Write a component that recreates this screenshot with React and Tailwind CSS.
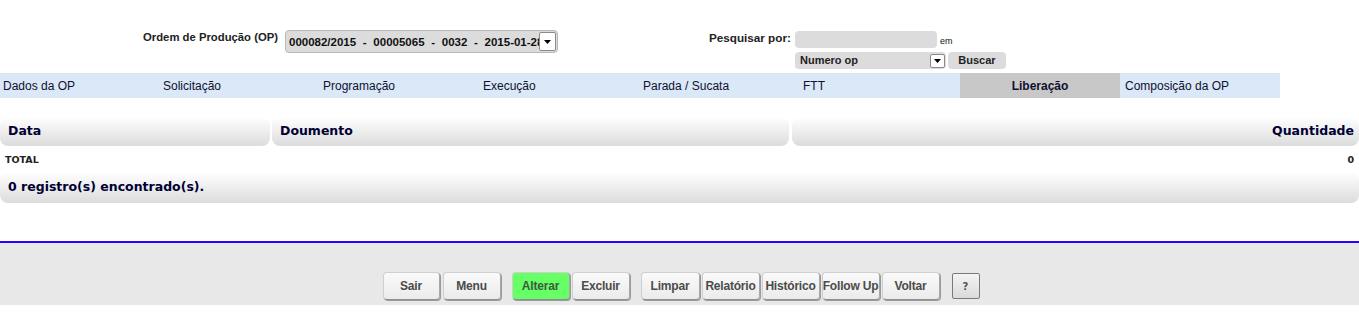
import React from "react";

const tabs = [
  "Dados da OP",
  "Solicitação",
  "Programação",
  "Execução",
  "Parada / Sucata",
  "FTT",
  "Liberação",
  "Composição da OP",
];

function Arrow({ className }) {
  return (
    <div className={"flex items-center justify-center bg-white border border-[#8a8a8a] rounded-[2px] " + className}>
      <svg width="7" height="4" viewBox="0 0 7 4">
        <path d="M0 0 L7 0 L3.5 4 Z" fill="#000" />
      </svg>
    </div>
  );
}

function Btn({ children, green, w = "w-[58px]" }) {
  return (
    <div
      className={
        "h-[28px] " +
        w +
        " flex items-center justify-center overflow-hidden whitespace-nowrap rounded-[4px] border border-[#cfcfcf] border-b-[#8e8e8e] border-r-[#a8a8a8] shadow-[1px_1px_0_#9a9a9a] text-[12px] font-bold tracking-[-0.2px] " +
        (green ? "bg-[#66ff66] text-[#3f5a3f]" : "bg-gradient-to-b from-[#fafafa] to-[#ebebeb] text-[#4b4b4b]")
      }
      style={{ fontFamily: '"Liberation Sans", Arial, sans-serif' }}
    >
      {children}
    </div>
  );
}

export default function App() {
  const sans = { fontFamily: '"Liberation Sans", Arial, sans-serif' };
  const dv = { fontFamily: '"DejaVu Sans", Verdana, sans-serif' };
  return (
    <div className="w-[1359px] h-[313px] bg-white overflow-hidden" style={sans}>
      {/* top filters */}
      <div className="flex h-[73px] pt-[30px]">
        <div className="w-[278px] text-right text-[11.3px] font-bold text-[#222] pt-[1px] leading-[13px]">
          Ordem de Produção (OP)
        </div>
        <div className="ml-[7px] w-[273px] h-[23px] rounded-[4px] bg-[#dcdcdc] border border-[#b8b8b8] flex items-center relative overflow-hidden">
          <span className="pl-[3px] text-[11.5px] font-bold text-[#111] whitespace-nowrap leading-[14px] [word-spacing:3.5px]">
            000082/2015 - 00005065 - 0032 - 2015-01-28
          </span>
          <Arrow className="absolute right-[1px] top-[1px] w-[17px] h-[19px]" />
        </div>
        <div className="ml-[151px] w-[86px] text-[11.7px] font-bold text-[#222] pt-[1px] leading-[13px]">
          Pesquisar por:
        </div>
        <div className="flex flex-col">
          <div className="flex items-end">
            <div className="w-[142px] h-[17px] rounded-[4px] bg-[#dcdcdc] mt-[1px]" />
            <span className="ml-[3px] text-[9px] text-[#111] leading-[10px] mb-[2px]">em</span>
          </div>
          <div className="flex mt-[4px]">
            <div className="w-[151px] h-[17px] rounded-[4px] bg-[#dcdcdc] flex items-center relative">
              <span className="pl-[5px] text-[11px] font-bold text-[#222] leading-[13px]">Numero op</span>
              <Arrow className="absolute right-[1px] top-[2px] w-[15px] h-[14px]" />
            </div>
            <div className="ml-[2px] w-[58px] h-[17px] rounded-[4px] bg-[#dcdcdc] flex items-center justify-center text-[11px] font-bold text-[#222]">
              Buscar
            </div>
          </div>
        </div>
      </div>

      {/* tabs */}
      <div className="flex w-[1280px] h-[25px] bg-[#dae8f7]">
        {tabs.map((t) =>
          t === "Liberação" ? (
            <div key={t} className="w-[160px] h-full bg-[#c8c8c8] flex items-center justify-center text-[12px] font-bold text-[#101030]">
              {t}
            </div>
          ) : (
            <div key={t} className={"w-[160px] h-full flex items-center text-[12px] text-[#101030] " + (t === "Composição da OP" ? "pl-[5px]" : "pl-[3px]")}>
              {t}
            </div>
          )
        )}
      </div>

      {/* table */}
      <div className="mt-[19px]" style={dv}>
        <div className="flex gap-[2px] h-[29px]">
          <div className="w-[270px] rounded-[8px] bg-gradient-to-b from-white to-[#dcdcdc] flex items-center pl-[8px] text-[12.5px] font-bold text-[#000033]">
            Data
          </div>
          <div className="w-[517px] rounded-[8px] bg-gradient-to-b from-white to-[#dcdcdc] flex items-center pl-[8px] text-[12.5px] font-bold text-[#000033]">
            Doumento
          </div>
          <div className="ml-[1px] flex-1 rounded-[8px] bg-gradient-to-b from-white to-[#dcdcdc] flex items-center justify-end pr-[5px] text-[12.5px] font-bold text-[#000033]">
            Quantidade
          </div>
        </div>
        <div className="flex justify-between items-center h-[26px] pt-[2px] px-[5px] text-[9.5px] font-bold text-[#222]">
          <span>TOTAL</span>
          <span>0</span>
        </div>
        <div className="h-[31px] rounded-[8px] bg-gradient-to-b from-white to-[#dcdcdc] flex items-center pl-[8px] text-[12.5px] font-bold text-[#000033]">
          0 registro(s) encontrado(s).
        </div>
      </div>

      {/* bottom bar */}
      <div className="mt-[38px] h-[2px] bg-[#2a00ff]" />
      <div className="h-[62px] bg-[#e8e8e8] flex justify-center pt-[29px] pl-[3px]">
        <div className="flex">
          <Btn w="w-[57px]">Sair</Btn>
          <div className="ml-[3px]"><Btn>Menu</Btn></div>
          <div className="ml-[11px]"><Btn green>Alterar</Btn></div>
          <div className="ml-[2px]"><Btn>Excluir</Btn></div>
          <div className="ml-[11px]"><Btn w="w-[59px]">Limpar</Btn></div>
          <div className="ml-[2px]"><Btn>Relatório</Btn></div>
          <div className="ml-[2px]"><Btn>Histórico</Btn></div>
          <div className="ml-[2px]"><Btn>Follow Up</Btn></div>
          <div className="ml-[2px]"><Btn>Voltar</Btn></div>
          <div className="ml-[12px] mt-[1px]">
            <div className="w-[28px] h-[26px] rounded-[2px] border border-[#7a7a7a] bg-gradient-to-b from-[#f4f4f4] to-[#dadada] flex items-center justify-center text-[10px] font-bold text-[#555]" style={dv}>
              ?
            </div>
          </div>
        </div>
      </div>
    </div>
  );
}
